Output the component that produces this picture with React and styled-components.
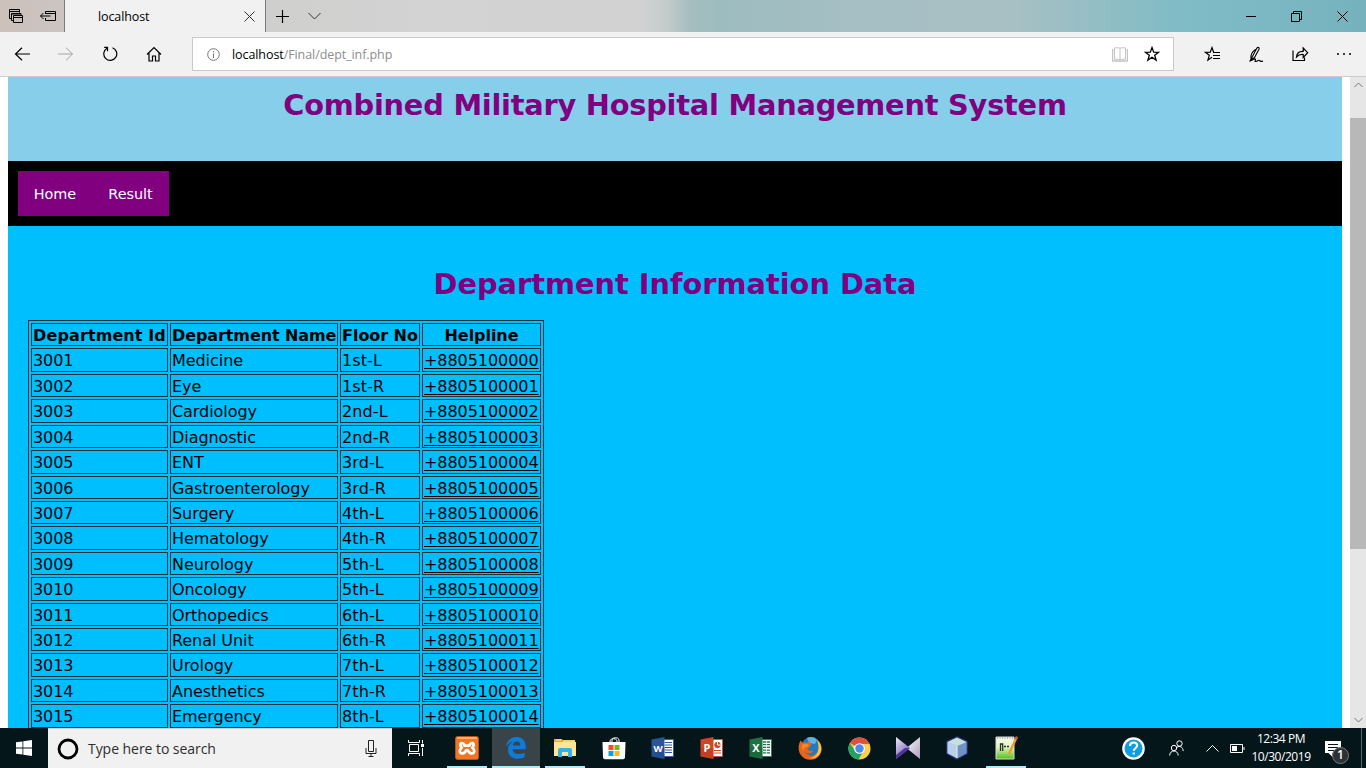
import React from 'react';
import styled, { createGlobalStyle } from 'styled-components';

const Global = createGlobalStyle`
  * { box-sizing: border-box; }
  html, body { margin: 0; padding: 0; overflow: hidden; background: #fff; }
  svg { display: block; flex: none; }
`;

const uiFont = `'Open Sans', 'Noto Sans', sans-serif`;
const pageFont = `'DejaVu Sans', Verdana, sans-serif`;

const Screen = styled.div`
  width: 1366px;
  height: 768px;
  display: flex;
  flex-direction: column;
  overflow: hidden;
  font-family: ${uiFont};
`;

/* ---------- browser chrome ---------- */
const TabStrip = styled.div`
  height: 32px;
  flex: none;
  display: flex;
  background: linear-gradient(90deg, #cdc1bb 0, #cbc4c0 60px, #cfcfce 270px, #d3d3d3 420px, #d2d2d2 640px, #c3cbcb 668px, #a5bdbe 690px, #9dbcbf 720px, #a6bfc4 860px, #a8c0c4 1010px, #93bec4 1100px, #81bcc6 1170px, #7cb9c4 1250px, #75b2bd 1366px);
`;
const TabTools = styled.div`
  width: 64px;
  display: flex;
  align-items: center;
  padding-left: 9px;
  gap: 17px;
`;
const Tab = styled.div`
  width: 202px;
  display: flex;
  align-items: center;
  justify-content: space-between;
  padding: 0 10px 0 33px;
  background: #f1f1f1;
  border-left: 1px solid #7b7b7b;
  border-right: 1px solid #7b7b7b;
  font-size: 12.5px;
  letter-spacing: -0.1px;
  color: #000;
`;
const TabActions = styled.div`
  display: flex;
  align-items: center;
  gap: 19px;
  padding-left: 10px;
  flex: 1;
`;
const WindowButtons = styled.div`
  display: flex;
  align-items: center;
  gap: 35px;
  padding-right: 18px;
`;
const Toolbar = styled.div`
  height: 45px;
  flex: none;
  display: flex;
  align-items: center;
  background: #f1f1f1;
  border-bottom: 1px solid #ccc;
`;
const NavButtons = styled.div`
  width: 192px;
  display: flex;
  align-items: center;
  padding-left: 14px;
  gap: 28px;
`;
const AddressBar = styled.div`
  width: 982px;
  height: 34px;
  display: flex;
  align-items: center;
  background: #fff;
  border: 1px solid #cacaca;
  padding: 0 13px 0 14px;
`;
const Url = styled.div`
  flex: 1;
  padding-left: 12px;
  font-size: 12.5px;
  letter-spacing: -0.08px;
  color: #8d8d8d;
  b { font-weight: 400; color: #000; }
`;
const AddressIcons = styled.div`
  display: flex;
  align-items: center;
  gap: 16px;
`;
const ToolbarIcons = styled.div`
  flex: 1;
  display: flex;
  align-items: center;
  justify-content: space-between;
  padding: 0 14px 0 30px;
`;

/* ---------- web page ---------- */
const Viewport = styled.div`
  height: 651px;
  flex: none;
  display: flex;
  background: #fff;
  overflow: hidden;
`;
const Page = styled.main`
  width: 1350px;
  padding: 0 8px;
  display: flex;
  flex-direction: column;
  font-family: ${pageFont};
`;
const Title = styled.h1`
  margin: 0;
  color: purple;
  text-align: center;
  font-weight: 700;
  font-size: ${(p) => p.$size};
  letter-spacing: ${(p) => p.$track};
  line-height: 36px;
  white-space: nowrap;
`;
const Banner = styled.header`
  height: 84px;
  flex: none;
  padding-top: 10px;
  background: #87ceeb;
`;
const NavBar = styled.nav`
  height: 65px;
  flex: none;
  display: flex;
  padding: 10px;
  background: #000;
`;
const NavLink = styled.a`
  width: ${(p) => p.$width};
  height: 45px;
  line-height: 46px;
  text-align: center;
  background: purple;
  color: #fff;
  font-size: 14.4px;
  letter-spacing: -0.03px;
`;
const Content = styled.section`
  flex: 1;
  padding: 40px 20px 0;
  background: #00bfff;
  min-height: 0;
`;
const DataTable = styled.table`
  width: 516px;
  margin-top: 18px;
  border: 1px solid #263238;
  padding: 2px;
  display: block;
  font-size: 16px;
  color: #000;
`;
const Rows = styled.tbody`
  display: flex;
  flex-direction: column;
  gap: 2px;
`;
const Row = styled.tr`
  display: grid;
  grid-template-columns: 137px 168px 80px 119px;
  grid-template-rows: 23.43px;
  column-gap: 2px;
`;
const Cell = styled.td`
  border: 1px solid #263238;
  padding: 0 1px;
  height: 23.43px;
  line-height: 23.2px;
  white-space: nowrap;
  letter-spacing: ${(p) => p.$track || '-0.06px'};
`;
const HeadCell = styled(Cell).attrs({ as: 'th' })`
  font-weight: 700;
  text-align: center;
`;
const Phone = styled.a`
  text-decoration: underline;
  text-underline-offset: 2px;
  text-decoration-thickness: 1px;
`;
const Scrollbar = styled.div`
  width: 16px;
  display: flex;
  flex-direction: column;
  align-items: center;
  background: #e6e6e6;
`;
const ScrollArrow = styled.div`
  height: ${(p) => p.$h};
  flex: none;
  padding-top: ${(p) => p.$top};
`;
const Thumb = styled.div`
  width: 16px;
  height: 431px;
  flex: none;
  background: #b8b8b8;
`;

/* ---------- taskbar ---------- */
const Taskbar = styled.footer`
  height: 40px;
  flex: none;
  display: flex;
  align-items: stretch;
  background: #05161b;
  color: #fff;
  position: relative;
`;
const BarButton = styled.div`
  width: 48px;
  display: flex;
  align-items: center;
  justify-content: center;
`;
const Search = styled.div`
  width: 344px;
  display: flex;
  align-items: center;
  background: #f1f1f1;
  border-top: 1px solid #d0cfcf;
  color: #2e2e2e;
  padding: 0 14px 0 9px;
  span {
    flex: 1;
    padding-left: 9px;
    font-size: 14px;
    letter-spacing: -0.05px;
  }
`;
const Apps = styled.div`
  display: flex;
  gap: 1px;
  padding-left: 3px;
`;
const AppButton = styled(BarButton)`
  background:
    linear-gradient(#a9edf8, #a9edf8) center bottom / ${(p) => p.$line || '0'} 2px no-repeat,
    ${(p) => (p.$active ? '#384448' : 'transparent')};
`;
const Tray = styled.div`
  flex: 1;
  display: flex;
  align-items: center;
  justify-content: flex-end;
`;
const TrayItem = styled.div`
  margin-right: ${(p) => p.$right};
`;
const Clock = styled.div`
  width: 72px;
  text-align: center;
  font-size: 12px;
  line-height: 18px;
  letter-spacing: -0.45px;
  white-space: nowrap;
`;
const ActionCenter = styled.div`
  position: relative;
  margin-left: 8px;
  margin-right: 20px;
`;
const Count = styled.div`
  position: absolute;
  left: 7px;
  top: 7px;
  width: 17px;
  height: 17px;
  border-radius: 50%;
  border: 1px solid #777d80;
  background: #2b3134;
  font-size: 12px;
  font-weight: 600;
  line-height: 14px;
  text-align: center;
`;
const ShowDesktop = styled.div`
  width: 5px;
  border-left: 1px solid #5c686c;
`;

const Line = ({ w, h, color = '#000', sw = 1, children }) => (
  <svg width={w} height={h} viewBox={`0 0 ${w} ${h}`} fill="none" stroke={color} strokeWidth={sw}>
    {children}
  </svg>
);

const Office = ({ letter, color, dark, sheet }) => (
  <svg width="24" height="24" viewBox="0 0 24 24">
    <rect x="12" y="3.500" width="10.500" height="17" fill="#fff" stroke={color} strokeWidth=".8" />
    {sheet}
    <path d="M.5 3.500 13.500 1v22L.5 20.500z" fill={color} />
    <path d="M.5 12h13v11L.5 20.500z" fill={dark} opacity=".3" />
    <text x="7" y="15.900" textAnchor="middle" fill="#fff" fontFamily="Open Sans, sans-serif" fontWeight="700" fontSize={letter === 'W' ? 9.5 : 11}>{letter}</text>
  </svg>
);

const Xampp = () => (
  <svg width="24" height="24" viewBox="0 0 24 24">
    <rect x=".5" y=".5" width="23" height="23" rx="2" fill="#ef7623" stroke="#b75013" />
    <path d="M2 2h20" stroke="#ffae74" strokeWidth="2" />
    <path d="M9.500 9.700C9.500 7 5.300 6 5.300 9c0 1.300.8 1.800 1.600 2.600C5.500 12.400 4.800 13.300 4.800 15c0 3.600 5 3 6.400-.8h1.600c1.400 3.800 6.400 4.400 6.400.8 0-1.700-.7-2.600-2.100-3.400.8-.8 1.600-1.300 1.600-2.600 0-3-4.200-2-4.200.7z" fill="none" stroke="#fff" strokeWidth="2.700" strokeLinejoin="round" />
  </svg>
);

const Edge = () => (
  <svg width="20" height="22" viewBox="0 0 20 22">
    <path d="M0 9.600C.8 3.800 4.800 0 10.500 0c5.800 0 9.300 4.200 9.300 9.700v2.500H6.600c.2 3.200 3 4.900 6.300 4.900 2.200 0 4.200-.7 5.700-1.600v4.600c-1.900 1.100-4.300 1.700-6.800 1.700C5.700 21.800 2 18 2 12.700c0-3.500 1.900-6.500 5.100-8.100C4.400 5 1.800 6.700 0 9.600zM6.800 8.600h7.500c0-2.600-1.200-4.100-3.600-4.100-2.200 0-3.600 1.600-3.900 4.100z" fill="#0c7cd8" />
  </svg>
);

const Explorer = () => (
  <svg width="22" height="20" viewBox="0 0 22 20">
    <path d="M0 1h8l2 3H0z" fill="#e6a93a" />
    <path d="M9 2h12v4H9z" fill="#f3d37c" />
    <path d="M0 4h22v14H0z" fill="#ffe694" />
    <path d="M2 2h5" stroke="#fff0b4" />
    <path d="M4 19v-7a2 2 0 0 1 2-2h10a2 2 0 0 1 2 2v7h-4v-5H8v5z" fill="#35b1ea" />
  </svg>
);

const Store = () => (
  <svg width="24" height="24" viewBox="0 0 24 24">
    <path d="M8 8V4.500a4 3.500 0 0 1 7 0V8M10 7V3.500a4 3.500 0 0 1 7 0V8" fill="none" stroke="#fff" strokeWidth="1" />
    <path d="M.5 6h23L23 21.500a2 2 0 0 1-2 1.800H3a2 2 0 0 1-2-1.800z" fill="#fff" />
    <path d="M6.500 9h5v5h-5z" fill="#f25022" /><path d="M12.500 9h5v5h-5z" fill="#7fba00" />
    <path d="M6.500 15h5v5h-5z" fill="#00a4ef" /><path d="M12.500 15h5v5h-5z" fill="#ffb900" />
  </svg>
);

const Firefox = () => (
  <svg width="24" height="24" viewBox="0 0 24 24">
    <circle cx="13" cy="10.500" r="9.500" fill="#2779bd" />
    <path d="M9 2c4-2 8-1 10 2l-2 4-6-1z" fill="#5cb4e0" />
    <path d="M2.500 4.500 5 7c1.500-.8 3-.8 4 0l3-3c-.5 2-.5 3.500 1.500 4.500L11 11.500 9.500 13c1 2 3.500 2.500 6 1.500-2 3.500-6 3.500-8.500 1.500 3 5.500 12.500 4.500 14-3 .6-3 0-6.500-2-9.500 5.500 4.500 6.200 11.500 2 16.500C16 26 6 24.500 2.500 18.500-.3 14 .3 8.500 2.500 4.500z" fill="#e8641b" />
    <path d="M19 4c5.500 4.500 5.200 11.500 1.500 15.500-3 3-7 3.500-10 2.500 8 0 12.500-8 8.500-18z" fill="#fcc53a" />
    <path d="M4 9c1-1 3-1.500 5-1l2 2-3 1c-2 .5-3 2-2 4-1.500-1-2.500-3-2-6z" fill="#f58b25" />
  </svg>
);

const Chrome = () => (
  <svg width="23" height="23" viewBox="0 0 24 24">
    <circle cx="12" cy="12" r="11.500" fill="#fbd14b" />
    <path d="M12 12 2 6.300A11.500 11.500 0 0 1 22 6.300V7H12z" fill="#dd5044" />
    <path d="M2 6.300A11.500 11.500 0 0 0 11 23.500l5-9L12 12 7.500 14.500z" fill="#22a366" />
    <path d="M12 6.500h10.200" stroke="#dd5044" />
    <circle cx="12" cy="12" r="5.600" fill="#fff" /><circle cx="12" cy="12" r="4.400" fill="#4a8af4" />
  </svg>
);

const VisualStudio = () => (
  <svg width="24" height="22" viewBox="0 0 24 22">
    <defs>
      <linearGradient id="vsL" x1="0" y1="0" x2=".6" y2="1"><stop stopColor="#f0edf6" /><stop offset=".6" stopColor="#a595d2" /><stop offset="1" stopColor="#5a3fa3" /></linearGradient>
      <linearGradient id="vsR" x1="0" y1="0" x2="1" y2="1"><stop stopColor="#fff" /><stop offset="1" stopColor="#a89cb8" /></linearGradient>
    </defs>
    <path d="M24 0v22L10.500 11z" fill="url(#vsR)" />
    <path d="M0 0 14 11 0 22z" fill="url(#vsL)" />
    <path d="M0 22V18l9-7h5z" fill="#50349a" />
  </svg>
);

const NetBeans = () => (
  <svg width="22" height="24" viewBox="0 0 22 24">
    <path d="M11 1 21 5.500v12L11 23 1 17.500v-12z" fill="#8fafd7" stroke="#293477" strokeWidth="1.400" />
    <path d="M1.500 6 11 10v12.300L1.500 17.200z" fill="#b9cfeb" />
    <path d="M20.500 6 11 10v12.300l9.500-5.100z" fill="#6f93c3" />
    <path d="M11 1.500 20.500 6 11 10 1.500 6z" fill="#c9dfdd" />
    <path d="M11 10v12" stroke="#e6f1fb" />
  </svg>
);

const NotepadPP = () => (
  <svg width="23" height="24" viewBox="0 0 23 24">
    <defs><linearGradient id="npp" x2="0" y2="1"><stop stopColor="#f8fbf2" /><stop offset=".45" stopColor="#e4f4c4" /><stop offset="1" stopColor="#4fc215" /></linearGradient></defs>
    <path d="M1 1h18v22H1z" fill="url(#npp)" stroke="#d9d9d2" />
    <path d="M2 2h17" stroke="#777" strokeDasharray="1 1.500" />
    <path d="M5.500 15V8h2.200v7M9 10.500h2M12 10.500h2" stroke="#263020" fill="none" strokeWidth="1.300" />
    <path d="m21.500 1.500-6.500 14-1.500 2.500" stroke="#e9a12b" strokeWidth="2.400" fill="none" />
    <path d="m22 .5-1 2.500" stroke="#c85238" strokeWidth="2.500" />
  </svg>
);

const sheetLines = <path d="M14 6.500h7M14 9h7M14 11.500h7M14 14h7M14 16.500h7" stroke="#2a5699" strokeWidth="1" />;
const sheetChart = (
  <g stroke="#d04727" fill="none"><circle cx="17.500" cy="9" r="2.800" fill="#d04727" /><path d="M17.500 9V5.500M17.500 9h3.500" stroke="#fff" /><path d="M14 14.500h7M14 17h7" /></g>
);
const sheetGrid = <path d="M14 6h7M14 8.700h7M14 11.400h7M14 14.100h7M14 16.800h7" stroke="#207245" strokeWidth="1.300" strokeDasharray="3.300 .7" />;

const apps = [
  { id: 'xampp', icon: <Xampp />, line: '40px' },
  { id: 'edge', icon: <Edge />, line: '48px', active: true },
  { id: 'explorer', icon: <Explorer />, line: '40px' },
  { id: 'store', icon: <Store /> },
  { id: 'word', icon: <Office letter="W" color="#2a5699" dark="#173e7c" sheet={sheetLines} /> },
  { id: 'ppt', icon: <Office letter="P" color="#d04727" dark="#a93218" sheet={sheetChart} /> },
  { id: 'excel', icon: <Office letter="X" color="#207245" dark="#115a31" sheet={sheetGrid} /> },
  { id: 'firefox', icon: <Firefox /> },
  { id: 'chrome', icon: <Chrome /> },
  { id: 'vs', icon: <VisualStudio /> },
  { id: 'netbeans', icon: <NetBeans /> },
  { id: 'npp', icon: <NotepadPP />, line: '40px' },
];

const departments = [
  ['Medicine', '1st-L'], ['Eye', '1st-R'], ['Cardiology', '2nd-L'], ['Diagnostic', '2nd-R'],
  ['ENT', '3rd-L'], ['Gastroenterology', '3rd-R'], ['Surgery', '4th-L'], ['Hematology', '4th-R'],
  ['Neurology', '5th-L'], ['Oncology', '5th-L'], ['Orthopedics', '6th-L'], ['Renal Unit', '6th-R'],
  ['Urology', '7th-L'], ['Anesthetics', '7th-R'], ['Emergency', '8th-L'],
];

export default function App() {
  return (
    <Screen>
      <Global />
      <TabStrip>
        <TabTools>
          <Line w={14} h={14}>
            <path d="M2.500 9.500h-2v-9h10v3M.5 2.500h10M4.500 11.500h-2v-7h9.500v2M2.500 5h9" />
            <path d="M4.500 6.500h9v7h-9zM4.500 8.500h9" />
          </Line>
          <Line w={17} h={12}>
            <path d="M5.500 4V1.500h10v9h-10V8M5.500 3.500h10M.5 6h10M3.500 3l-3 3 3 3" />
          </Line>
        </TabTools>
        <Tab>
          localhost
          <Line w={11} h={11} color="#333"><path d="m.5.5 10 10m0-10-10 10" /></Line>
        </Tab>
        <TabActions>
          <Line w={13} h={13}><path d="M6.500 0v13M0 6.500h13" strokeWidth="1.200" /></Line>
          <Line w={13} h={8} color="#333"><path d="m.5 1 6 6 6-6" /></Line>
        </TabActions>
        <WindowButtons>
          <Line w={10} h={10}><path d="M0 5.500h10" /></Line>
          <Line w={11} h={11}><path d="M.5 2.500h8v8h-8zM2.500 2.500v-2h8v8h-2" /></Line>
          <Line w={11} h={11}><path d="m.5.5 10 10m0-10-10 10" /></Line>
        </WindowButtons>
      </TabStrip>
      <Toolbar>
        <NavButtons>
          <Line w={16} h={14}><path d="M16 7H1.500M8 .7 1.500 7 8 13.300" strokeWidth="1.200" /></Line>
          <Line w={16} h={14} color="#a5a5a5"><path d="M0 7h14.500M8 .7 14.500 7 8 13.300" /></Line>
          <Line w={16} h={16}><path d="M10.500 1.700A6.500 6.500 0 1 1 5 2.200M2.200 1.300h3.300v3.900" strokeWidth="1.200" /></Line>
          <Line w={16} h={16}><path d="m1 8.500 7-7 7 7M3 7v8h3.500v-5h3v5H13V7" strokeWidth="1.200" /></Line>
        </NavButtons>
        <AddressBar>
          <Line w={13} h={13} color="#777"><circle cx="6.500" cy="6.500" r="5.800" /><path d="M6.500 5.500V10M6.500 3v1.300" /></Line>
          <Url><b>localhost</b>/Final/dept_inf.php</Url>
          <AddressIcons>
            <Line w={16} h={15} color="#c4c4c4">
              <path d="M.5 2v12H7l1 .5 1-.5h6.500V2" strokeWidth="1.400" />
              <path d="M2.500.8H7l1 .7 1-.7h4.500v11.500H9l-1 .7-1-.7H2.500zM8 1.500V13" />
            </Line>
            <Line w={16} h={16}><path d="m8 1.600 1.700 4.600 4.900.1-3.900 3 1.400 4.800L8 11.300l-4.100 2.800 1.400-4.800-3.900-3 4.900-.1z" strokeWidth="1.300" /></Line>
          </AddressIcons>
        </AddressBar>
        <ToolbarIcons>
          <Line w={17} h={16}>
            <path d="M9.600 6.200 8 1.600 6.300 6.200l-4.900.1 3.900 3-1.400 4.800L8 11.300" strokeWidth="1.200" />
            <path d="M9 6.500h7M9 9.500h7M9 12.500h7" />
          </Line>
          <Line w={16} h={17}>
            <path d="M2.500 14 8.800 2.200c.8-1.400 3-.8 2.200 1L6.500 11.500l-4 2.500zM7.500 3.500c-4 2.500-5 6-4.500 9.500M1.500 15.200c4-1.700 6-3.200 6-1.700s-1.500 2.300.5 2c1.500-.2 2-1.600 3-1.200s.8 1.700 4 .8" strokeWidth="1.100" />
          </Line>
          <Line w={17} h={16}>
            <path d="M1 4.500v10h11.500v-3M4.500 11c.3-3.500 2.500-5.700 6-5.700h.7V2l4.500 4.700-4.500 4.700V8.500c-3-.3-5 .5-6.700 2.500z" strokeWidth="1.200" />
          </Line>
          <Line w={16} h={2}><path d="M1 1h2M7 1h2M13 1h2" strokeWidth="1.600" /></Line>
        </ToolbarIcons>
      </Toolbar>

      <Viewport>
        <Page>
          <Banner><Title $size="28.8px" $track="-0.22px">Combined Military Hospital Management System</Title></Banner>
          <NavBar>
            <NavLink $width="74px">Home</NavLink>
            <NavLink $width="77px">Result</NavLink>
          </NavBar>
          <Content>
            <Title as="h2" $size="28.8px" $track="0px">Department Information Data</Title>
            <DataTable>
              <Rows>
                <Row>
                  <HeadCell $track="0.1px">Department Id</HeadCell>
                  <HeadCell $track="-0.1px">Department Name</HeadCell>
                  <HeadCell>Floor No</HeadCell>
                  <HeadCell>Helpline</HeadCell>
                </Row>
                {departments.map(([name, floor], i) => (
                  <Row key={name}>
                    <Cell>{3001 + i}</Cell>
                    <Cell>{name}</Cell>
                    <Cell $track="0.1px">{floor}</Cell>
                    <Cell><Phone>+{8805100000 + i}</Phone></Cell>
                  </Row>
                ))}
              </Rows>
            </DataTable>
          </Content>
        </Page>
        <Scrollbar>
          <ScrollArrow $h="41px" $top="5px"><Line w={9} h={6} color="#777"><path d="m.5 5 4-4 4 4" /></Line></ScrollArrow>
          <Thumb />
          <ScrollArrow $h="179px" $top="168px"><Line w={9} h={6} color="#777"><path d="m.5 1 4 4 4-4" /></Line></ScrollArrow>
        </Scrollbar>
      </Viewport>

      <Taskbar>
        <BarButton>
          <svg width="16" height="16" viewBox="0 0 16 16" fill="#fff"><path d="M0 2.300 6.500 1.400v6.100H0zM7.300 1.300 16 0v7.500H7.300zM0 8.400h6.500v6.200L0 13.700zM7.300 8.400H16V16l-8.700-1.300z" /></svg>
        </BarButton>
        <Search>
          <Line w={22} h={22} sw={2.8}><circle cx="11" cy="11" r="9" /></Line>
          <span>Type here to search</span>
          <Line w={13} h={17} color="#222"><path d="M3.500.5h5v11h-5zM1 8v5.500h10V8M6 13.500v3M3.500 16.500h5" /></Line>
        </Search>
        <BarButton>
          <Line w={17} h={16} color="#fff"><path d="M.5 0v2.500h11V0M.5 16v-2.500h11V16M1.500 4.500h9v7h-9zM14.500 0v3.500M14.500 8v8" /><path d="M13 5.500h3" strokeWidth="3" /></Line>
        </BarButton>
        <Apps>
          {apps.map((a) => (
            <AppButton key={a.id} $line={a.line} $active={a.active}>{a.icon}</AppButton>
          ))}
        </Apps>
        <Tray>
          <TrayItem $right="24px">
            <svg width="23" height="23" viewBox="0 0 23 23">
              <circle cx="11.500" cy="11.500" r="11.300" fill="#fff" /><circle cx="11.500" cy="11.500" r="9" fill="#109ede" />
              <path d="M8 9c0-4.500 7.200-4.500 7.200-.4 0 2.600-3.500 2.700-3.500 5.200M11.700 15.500v2" fill="none" stroke="#fff" strokeWidth="2.100" />
            </svg>
          </TrayItem>
          <TrayItem $right="22px">
            <Line w={15} h={16} color="#fff"><circle cx="5" cy="8" r="2.700" /><path d="M.7 15.500c0-6 8.500-6 8.500 0" /><circle cx="10.500" cy="3.500" r="2.700" /><path d="M8 7.300c2.500-2 6-.5 6.200 3.700" /></Line>
          </TrayItem>
          <TrayItem $right="11px"><Line w={13} h={7} color="#fff"><path d="m.5 6.500 6-6 6 6" /></Line></TrayItem>
          <TrayItem $right="0px"><Line w={15} h={9} color="#fff"><path d="M.5.5h12v8H.5zM14 3v3" /><path d="M2 2h5v5H2z" fill="#fff" stroke="none" /></Line></TrayItem>
          <Clock>12:34 PM<br />10/30/2019</Clock>
          <ActionCenter>
            <svg width="16" height="17" viewBox="0 0 16 17"><path d="M0 1h16v12H7.500v4L3.500 13H0z" fill="#fff" /><path d="M3 4.500h10M3 7.500h10M3 10.500h6" stroke="#05161b" /></svg>
            <Count>1</Count>
          </ActionCenter>
        </Tray>
        <ShowDesktop />
      </Taskbar>
    </Screen>
  );
}
